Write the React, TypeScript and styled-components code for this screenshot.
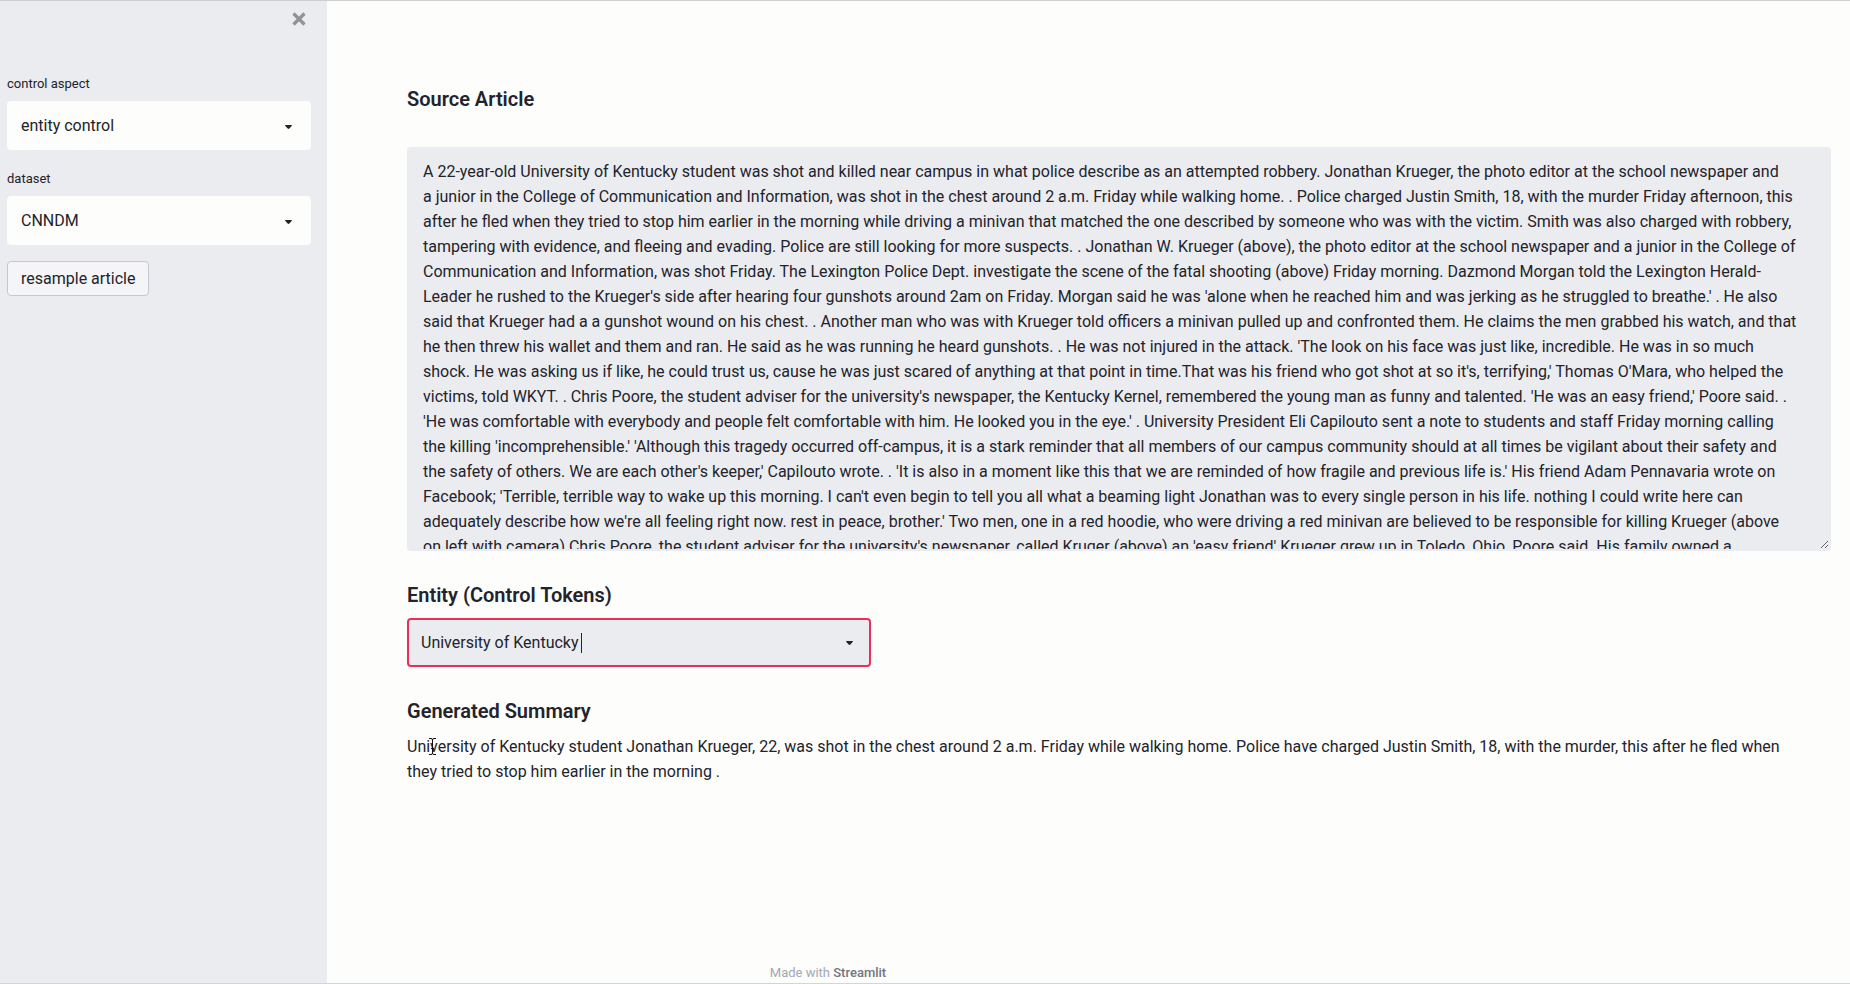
import React, { useState } from 'react';
import styled, { createGlobalStyle, css } from 'styled-components';

const ink = '#22232b';
const panel = '#ebecf0';
const paper = '#fdfdfc';
const accent = '#e8305a';

const GlobalStyle = createGlobalStyle`
  *, *::before, *::after { box-sizing: border-box; }
  body {
    margin: 0;
    background: ${paper};
    color: ${ink};
    font: 400 16px/25px Roboto, "Liberation Sans", sans-serif;
  }
  input, select, button, textarea { font: inherit; color: inherit; }
`;

const Page = styled.div`
  display: flex;
  min-height: 100vh;
  border-top: 1px solid #cfcfd2;
  border-bottom: 1px solid #d4d4dc;
`;

const Sidebar = styled.aside`
  display: flex;
  flex-direction: column;
  flex: 0 0 327px;
  padding: 8px 15px 24px 7px;
  background: ${panel};
`;

const CloseButton = styled.button`
  display: grid;
  place-items: center;
  align-self: flex-end;
  width: 26px;
  height: 20px;
  padding: 0;
  border: 0;
  background: none;
  color: #919296;
`;

const SidebarForm = styled.form`
  display: flex;
  flex-direction: column;
  align-items: flex-start;
  gap: 16px;
  margin-top: 42px;
`;

const Field = styled.div`
  width: 100%;
`;

const FieldLabel = styled.label`
  display: block;
  margin-bottom: 4px;
  font-size: 13px;
  line-height: 26px;
`;

const SelectBox = styled.div`
  position: relative;
  width: 304px;
  max-width: 100%;
`;

const Select = styled.select`
  display: block;
  width: 100%;
  height: 49px;
  padding: 0 40px 0 14px;
  border: 0;
  border-radius: 4px;
  appearance: none;
  background: ${paper};
`;

const arrow = css`
  display: block;
  width: 7px;
  height: 4px;
  fill: ${ink};
`;

const SelectArrow = styled.svg`
  ${arrow}
  position: absolute;
  top: 24px;
  right: 19px;
  pointer-events: none;
`;

const ComboArrow = styled.svg`
  ${arrow}
`;

const OutlineButton = styled.button`
  height: 35px;
  padding: 0 13px;
  border: 1px solid #c6c7d3;
  border-radius: 4px;
  background: #f5f5f8;
`;

const Main = styled.main`
  display: flex;
  flex: 1;
  flex-direction: column;
  min-width: 0;
  padding: 84px 19px 0 80px;
`;

const Heading = styled.h3`
  margin: 0;
  font-size: 20px;
  font-weight: 600;
  line-height: 28px;
`;

const Article = styled.textarea`
  display: block;
  width: 100%;
  height: 404px;
  margin: 34px 0 30px;
  padding: 10px 14px;
  border: 2px solid ${panel};
  border-radius: 4px;
  outline: 0;
  resize: vertical;
  scrollbar-width: none;
  white-space: pre;
  background: ${panel};
`;

const Columns = styled.div`
  display: grid;
  grid-template-columns: repeat(3, minmax(0, 1fr));
  gap: 16px;
  margin: 9px 0 30px;
`;

const Combo = styled.div`
  display: flex;
  align-items: center;
  height: 49px;
  padding: 0 12px;
  border: 2px solid ${accent};
  border-radius: 4px;
  background: ${panel};
`;

const ComboInput = styled.input`
  field-sizing: content;
  min-width: 0;
  padding: 0;
  border: 0;
  outline: 0;
  background: none;
  caret-color: transparent;
`;

const Caret = styled.span`
  width: 1px;
  height: 20px;
  margin-left: 2px;
  background: ${ink};
`;

const ComboToggle = styled.button`
  display: grid;
  place-items: center;
  width: 16px;
  height: 24px;
  margin-left: auto;
  padding: 0;
  border: 0;
  background: none;
`;

const Summary = styled.p`
  position: relative;
  margin: 9px 0 0;
`;

const Pointer = styled.svg`
  position: absolute;
  top: 4px;
  left: 21px;
  width: 9px;
  height: 17px;
  fill: none;
  stroke: #111;
`;

const Footer = styled.footer`
  max-width: 842px;
  margin-top: auto;
  padding-top: 24px;
  font-size: 13px;
  line-height: 20px;
  text-align: center;
  color: #a3a8b4;
`;

const FooterLink = styled.a`
  font-weight: 500;
  color: #73757c;
  text-decoration: none;
`;

const articleLines = [
  "A 22-year-old University of Kentucky student was shot and killed near campus in what police describe as an attempted robbery. Jonathan Krueger, the photo editor at the school newspaper and",
  "a junior in the College of Communication and Information, was shot in the chest around 2 a.m. Friday while walking home. . Police charged Justin Smith, 18, with the murder Friday afternoon, this",
  "after he fled when they tried to stop him earlier in the morning while driving a minivan that matched the one described by someone who was with the victim. Smith was also charged with robbery,",
  "tampering with evidence, and fleeing and evading. Police are still looking for more suspects. . Jonathan W. Krueger (above), the photo editor at the school newspaper and a junior in the College of",
  "Communication and Information, was shot Friday. The Lexington Police Dept. investigate the scene of the fatal shooting (above) Friday morning. Dazmond Morgan told the Lexington Herald-",
  "Leader he rushed to the Krueger's side after hearing four gunshots around 2am on Friday. Morgan said he was 'alone when he reached him and was jerking as he struggled to breathe.' . He also",
  "said that Krueger had a a gunshot wound on his chest. . Another man who was with Krueger told officers a minivan pulled up and confronted them. He claims the men grabbed his watch, and that",
  "he then threw his wallet and them and ran. He said as he was running he heard gunshots. . He was not injured in the attack. 'The look on his face was just like, incredible. He was in so much",
  "shock. He was asking us if like, he could trust us, cause he was just scared of anything at that point in time.That was his friend who got shot at so it's, terrifying,' Thomas O'Mara, who helped the",
  "victims, told WKYT. . Chris Poore, the student adviser for the university's newspaper, the Kentucky Kernel, remembered the young man as funny and talented. 'He was an easy friend,' Poore said. .",
  "'He was comfortable with everybody and people felt comfortable with him. He looked you in the eye.' . University President Eli Capilouto sent a note to students and staff Friday morning calling",
  "the killing 'incomprehensible.' 'Although this tragedy occurred off-campus, it is a stark reminder that all members of our campus community should at all times be vigilant about their safety and",
  "the safety of others. We are each other's keeper,' Capilouto wrote. . 'It is also in a moment like this that we are reminded of how fragile and previous life is.' His friend Adam Pennavaria wrote on",
  "Facebook; 'Terrible, terrible way to wake up this morning. I can't even begin to tell you all what a beaming light Jonathan was to every single person in his life. nothing I could write here can",
  "adequately describe how we're all feeling right now. rest in peace, brother.' Two men, one in a red hoodie, who were driving a red minivan are believed to be responsible for killing Krueger (above",
  "on left with camera) Chris Poore, the student adviser for the university's newspaper, called Kruger (above) an 'easy friend' Krueger grew up in Toledo, Ohio, Poore said. His family owned a",
];

function SidebarSelect({ id, label, value }: { id: string; label: string; value: string }) {
  return (
    <Field>
      <FieldLabel htmlFor={id}>{label}</FieldLabel>
      <SelectBox>
        <Select id={id} defaultValue={value}>
          <option>{value}</option>
        </Select>
        <SelectArrow viewBox="0 0 8 4" preserveAspectRatio="none" aria-hidden="true">
          <path d="M0.6 0H7.4Q8.4 0 7.6 0.9L5 3.6Q4 4.4 3 3.6L0.4 0.9Q-0.4 0 0.6 0Z" />
        </SelectArrow>
      </SelectBox>
    </Field>
  );
}

export default function App() {
  const [article, setArticle] = useState(articleLines.join('\n'));
  const [entity, setEntity] = useState('University of Kentucky');

  return (
    <>
      <GlobalStyle />
      <Page>
        <Sidebar>
          <CloseButton type="button" aria-label="Close sidebar">
            <svg width="14" height="14" viewBox="0 0 14 14" aria-hidden="true">
              <path d="M1.5 1.5L12.5 12.5M12.5 1.5L1.5 12.5" stroke="currentColor" strokeWidth="3.2" fill="none" />
            </svg>
          </CloseButton>
          <SidebarForm>
            <SidebarSelect id="aspect" label="control aspect" value="entity control" />
            <SidebarSelect id="dataset" label="dataset" value="CNNDM" />
            <OutlineButton type="button">resample article</OutlineButton>
          </SidebarForm>
        </Sidebar>
        <Main>
          <Heading id="source-title">Source Article</Heading>
          <Article
            aria-labelledby="source-title"
            spellCheck={false}
            value={article}
            onChange={(e) => setArticle(e.target.value)}
          />
          <Heading id="entity-title">Entity (Control Tokens)</Heading>
          <Columns>
            <Combo>
              <ComboInput
                role="combobox"
                aria-expanded={false}
                aria-labelledby="entity-title"
                spellCheck={false}
                value={entity}
                onChange={(e) => setEntity(e.target.value)}
              />
              <Caret />
              <ComboToggle type="button" aria-label="Show entities">
                <ComboArrow viewBox="0 0 8 4" preserveAspectRatio="none" aria-hidden="true">
                  <path d="M0.6 0H7.4Q8.4 0 7.6 0.9L5 3.6Q4 4.4 3 3.6L0.4 0.9Q-0.4 0 0.6 0Z" />
                </ComboArrow>
              </ComboToggle>
            </Combo>
          </Columns>
          <Heading>Generated Summary</Heading>
          <Summary>
            University of Kentucky student Jonathan Krueger, 22, was shot in the chest around 2 a.m. Friday while
            walking home. Police have charged Justin Smith, 18, with the murder, this after he fled when
            <br />
            they tried to stop him earlier in the morning .
            <Pointer viewBox="0 0 9 17" aria-hidden="true">
              <path d="M1 0.5H3Q4.5 0.5 4.5 2Q4.5 0.5 6 0.5H8M4.5 2V15M3 10.5H6M1 16.5H3Q4.5 16.5 4.5 15Q4.5 16.5 6 16.5H8" />
            </Pointer>
          </Summary>
          <Footer>
            Made with <FooterLink href="#streamlit">Streamlit</FooterLink>
          </Footer>
        </Main>
      </Page>
    </>
  );
}
